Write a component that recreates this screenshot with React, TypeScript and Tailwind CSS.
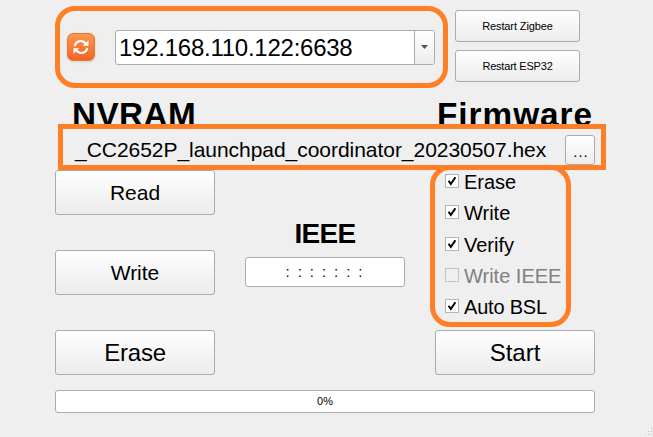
import type { ReactNode } from "react";

function Button({ className, children }: { className: string; children: ReactNode }) {
  return (
    <button
      className={`flex items-center justify-center rounded-[3px] border border-[#ababab] bg-linear-to-b from-white to-[#ececec] leading-none ${className}`}
    >
      {children}
    </button>
  );
}

function CheckRow({ label, checked, className }: { label: string; checked: boolean; className: string }) {
  return (
    <label className={`flex items-center gap-[5px] ${className}`}>
      <svg width="14" height="14" viewBox="0 0 14 14" className="shrink-0">
        <rect x=".5" y=".5" width="13" height="13" fill={checked ? "#fff" : "#efefef"} stroke={checked ? "#b4b4b4" : "#c4c4c4"} />
        {checked && <path d="M3.6 6.8 5.8 10 10.4 3.2" fill="none" stroke="#000" strokeWidth="2" />}
      </svg>
      <span className="pt-[2px] text-[20px] leading-6 whitespace-nowrap">{label}</span>
    </label>
  );
}

function RefreshIcon() {
  return (
    <svg width="16" height="16" viewBox="0 0 16 16" fill="none" stroke="#fff" strokeWidth="2.2">
      <path d="M1.7 7.2C2.2 3.5 5.5 1.6 8.8 2.1 10.6 2.4 11.8 3.3 12.8 4.8" />
      <path d="M14.3 8.8C13.8 12.5 10.5 14.4 7.2 13.9 5.4 13.6 4.2 12.7 3.2 11.2" />
      <path d="M15.5 1.2V6.8H9.8ZM.5 14.8V9.2H6.2Z" fill="#fff" stroke="none" />
    </svg>
  );
}

export default function App() {
  return (
    <div className="flex h-[437px] w-[653px] flex-col overflow-hidden bg-[#efefef] pt-[6px] pl-[55px] font-['Liberation_Sans',Arial,sans-serif] text-black">
      <header className="flex h-[82px] gap-[7px]">
        <div className="flex w-[393px] items-center rounded-[20px] border-[5px] border-[#ff7f27] pl-[7px]">
          <button className="flex size-[28px] items-center justify-center rounded-[6px] border border-[#e87535] bg-linear-to-b from-[#fd9550] to-[#f26422] shadow-sm">
            <RefreshIcon />
          </button>
          <div className="ml-[20px] flex h-[35px] w-[320px] overflow-hidden rounded-[3px] border border-[#ababab] bg-white">
            <span className="flex-1 pl-[3px] text-[24px] leading-[33px] tracking-[-0.25px]">192.168.110.122:6638</span>
            <span className="flex w-[20px] items-center justify-center border-l border-[#ababab] bg-linear-to-b from-white to-[#ececec]">
              <svg width="7" height="4" viewBox="0 0 7 4">
                <path d="M0 0H7L3.5 4Z" fill="#555" />
              </svg>
            </span>
          </div>
        </div>
        <div className="flex flex-col gap-2 pt-1">
          <Button className="h-8 w-[125px] text-[11px] tracking-[-0.1px]">Restart Zigbee</Button>
          <Button className="h-8 w-[125px] text-[11px] tracking-[-0.2px]">Restart ESP32</Button>
        </div>
      </header>

      <div className="flex h-[36px] w-[540px] justify-between pt-[8px] text-[33.3px] leading-[38px] font-bold">
        <h2 className="pl-[17px] tracking-[0.4px]">NVRAM</h2>
        <h2 className="w-[160px] pl-[2px] tracking-[1px]">Firmware</h2>
      </div>

      <div className="z-10 ml-[3px] flex h-[46px] w-[548px] shrink-0 items-center justify-between border-[5px] border-[#ff7f27] bg-[#efefef] pr-[6px] pl-[12px]">
        <span className="pt-[6px] text-[21px] leading-6 tracking-[-0.04px]">_CC2652P_launchpad_coordinator_20230507.hex</span>
        <Button className="mt-[6px] h-[30px] w-[30px] pt-[2px] pl-[2px] text-[15px] tracking-[1px]">...</Button>
      </div>

      <main className="flex h-[205px] w-[540px] shrink-0">
        <div className="flex flex-col gap-[35px]">
          <Button className="h-[45px] w-[160px] text-[21px]">Read</Button>
          <Button className="h-[45px] w-[160px] text-[21px]">Write</Button>
          <Button className="h-[45px] w-[160px] text-[24px] tracking-[-0.2px]">Erase</Button>
        </div>
        <div className="ml-[30px] flex w-[160px] flex-col items-center pt-[48px]">
          <h2 className="text-[28px] leading-8 font-bold tracking-[-0.7px]">IEEE</h2>
          <div className="mt-[7px] flex h-[30px] w-full items-center justify-center rounded-[3px] border border-[#ababab] bg-white text-[15px] tracking-[1.9px] whitespace-pre">
            : : : : : : :
          </div>
        </div>
        <div className="ml-[30px] flex w-[160px] flex-col">
          <div className="-mt-[5px] -ml-[5px] flex h-[162px] w-[141px] shrink-0 flex-col rounded-[20px] border-[5px] border-[#ff7f27] pl-[10px]">
            <CheckRow label="Erase" checked className="-mt-[5px] h-[31px]" />
            <CheckRow label="Write" checked className="h-[31px]" />
            <CheckRow label="Verify" checked className="h-[33px]" />
            <CheckRow label="Write IEEE" checked={false} className="h-[30px] text-[#808080]" />
            <CheckRow label="Auto BSL" checked className="h-[32px] tracking-[-0.2px]" />
          </div>
          <Button className="mt-[3px] h-[45px] w-[160px] shrink-0 text-[24px]">Start</Button>
        </div>
      </main>

      <div className="mt-[15px] flex h-[23px] w-[540px] shrink-0 items-center justify-center rounded-[3px] border border-[#ababab] bg-white text-[11px]">
        0%
      </div>

      <svg className="mt-auto mb-[1px] ml-auto shrink-0" width="9" height="9" viewBox="0 0 9 9" fill="#bdbdbd">
        <path d="M7 1h1v1H7zM4 4h1v1H4zM7 4h1v1H7zM1 7h1v1H1zM4 7h1v1H4zM7 7h1v1H7z" />
      </svg>
    </div>
  );
}
